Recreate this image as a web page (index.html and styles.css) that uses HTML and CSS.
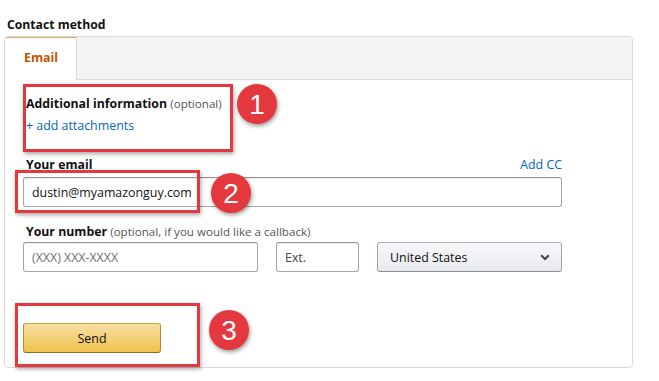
FILE: index.html
```html
<!DOCTYPE html>
<html lang="en">

<head>
    <meta charset="UTF-8">
    <meta name="viewport" content="width=device-width, initial-scale=1.0">
    <title>Contact method</title>
    <link rel="stylesheet" href="styles.css">
</head>

<body>
    <div class="page">
        <h2 class="section-title">Contact method</h2>

        <div class="panel">
            <div class="tabs">
                <div class="tab active">Email</div>
            </div>

            <div class="panel-body">
                <div class="field-label">Additional information <span class="muted">(optional)</span></div>
                <a class="link attach">+ add attachments</a>

                <div class="label-row">
                    <span class="field-label">Your email</span>
                    <a class="link">Add CC</a>
                </div>
                <input class="text-input email" type="text" value="dustin@myamazonguy.com">

                <div class="field-label number-label">Your number <span class="muted">(optional, if you would like a callback)</span></div>
                <div class="phone-row">
                    <input class="text-input phone" type="text" placeholder="(XXX) XXX-XXXX">
                    <input class="text-input ext" type="text" placeholder="Ext.">
                    <div class="select">
                        <span>United States</span>
                        <svg width="10" height="7" viewBox="0 0 10 7">
                            <path d="M1.2 1.2 L5 5 L8.8 1.2" fill="none" stroke="#444" stroke-width="2" />
                        </svg>
                    </div>
                </div>

                <button class="send">Send</button>
            </div>
        </div>

        <!-- annotation overlays -->
        <div class="mark mark-1"></div>
        <div class="mark mark-2"></div>
        <div class="mark mark-3"></div>
        <div class="badge badge-1">1</div>
        <div class="badge badge-2">2</div>
        <div class="badge badge-3">3</div>
    </div>
</body>

</html>
```

FILE: styles.css
```css
body {
    margin: 0;
    background: #fff;
    font-family: "Open Sans", "Liberation Sans", sans-serif;
    color: #111;
}

.page {
    position: relative;
    width: 659px;
    height: 381px;
    padding: 16px 0 0 4px;
    box-sizing: border-box;
}

.section-title {
    margin: 0 0 2px 3px;
    font-size: 12.2px;
    line-height: 18px;
    font-weight: 700;
}

.panel {
    width: 629px;
    border: 1px solid #dcdcdc;
    border-radius: 4px;
    box-sizing: border-box;
    overflow: hidden;
}

.tabs {
    display: flex;
    height: 43px;
    background: #f3f3f3;
    border-bottom: 1px solid #dcdcdc;
    box-sizing: border-box;
}

.tab {
    width: 72px;
    padding-left: 19px;
    box-sizing: border-box;
    font-size: 12.4px;
    font-weight: 700;
    line-height: 40px;
}

.tab.active {
    background: #fff;
    color: #c45500;
    border-top: 1px solid #dba865;
    border-right: 1px solid #dcdcdc;
    margin-bottom: -1px;
    height: 43px;
}

.panel-body {
    padding: 14px 70px 14px 18px;
}

.field-label {
    padding-left: 3px;
    font-size: 12.3px;
    line-height: 19px;
    font-weight: 700;
}

.muted {
    font-weight: 400;
    font-size: 11.6px;
    color: #555;
}

.link {
    display: block;
    font-size: 12.4px;
    line-height: 19px;
    color: #0066c0;
    text-decoration: none;
    cursor: pointer;
}

.attach {
    margin-top: 3px;
    padding-left: 3px;
}

.label-row {
    display: flex;
    justify-content: space-between;
    margin-top: 20px;
}

.text-input {
    display: block;
    height: 30px;
    padding: 0 8px;
    border: 1px solid #a6a6a6;
    border-top-color: #949494;
    border-radius: 3px;
    box-sizing: border-box;
    font-family: inherit;
    font-size: 12.4px;
    color: #111;
    box-shadow: 0 1px 0 rgba(255, 255, 255, 0.5), 0 1px 0 rgba(0, 0, 0, 0.07) inset;
}

.text-input::placeholder {
    color: #6f6f6f;
}

.email {
    width: 100%;
    margin-top: 3px;
}

.number-label {
    margin-top: 15px;
}

.phone-row {
    display: flex;
    gap: 18px;
    margin-top: 1px;
}

.phone {
    width: 235px;
}

.ext {
    width: 83px;
}

.ext::placeholder {
    color: #444;
}

.select {
    width: 185px;
    height: 30px;
    display: flex;
    align-items: center;
    justify-content: space-between;
    padding: 0 11px 0 12px;
    box-sizing: border-box;
    border: 1px solid #adb1b8;
    border-color: #adb1b8 #a2a6ac #8d9096;
    border-radius: 3px;
    background: linear-gradient(to bottom, #f7f8fa, #e7e9ec);
    font-size: 12.4px;
    color: #111;
}

.send {
    display: block;
    width: 138px;
    height: 30px;
    margin-top: 51px;
    border: 1px solid #a88734;
    border-color: #c6a144 #b08b3a #8c6d2a;
    border-radius: 3px;
    background: linear-gradient(to bottom, #f7dfa5, #f0c14b);
    font-family: inherit;
    font-size: 12.4px;
    color: #111;
    cursor: pointer;
}

.mark {
    position: absolute;
    border: 3px solid #e5383e;
    box-sizing: border-box;
    box-shadow: 1px 2px 4px rgba(0, 0, 0, 0.35);
}

.mark-1 {
    left: 23px;
    top: 84px;
    width: 210px;
    height: 68px;
}

.mark-2 {
    left: 15px;
    top: 170px;
    width: 185px;
    height: 43px;
}

.mark-3 {
    left: 15px;
    top: 303px;
    width: 185px;
    height: 64px;
}

.badge {
    position: absolute;
    width: 40px;
    height: 40px;
    border-radius: 50%;
    background: #e5383e;
    color: #fff;
    font-family: "Liberation Sans", Arial, sans-serif;
    font-size: 28px;
    line-height: 41px;
    text-align: center;
    box-shadow: 1px 2px 4px rgba(0, 0, 0, 0.4);
}

.badge-1 {
    left: 237px;
    top: 84px;
}

.badge-2 {
    left: 211px;
    top: 173px;
}

.badge-3 {
    left: 209px;
    top: 310px;
}
```
